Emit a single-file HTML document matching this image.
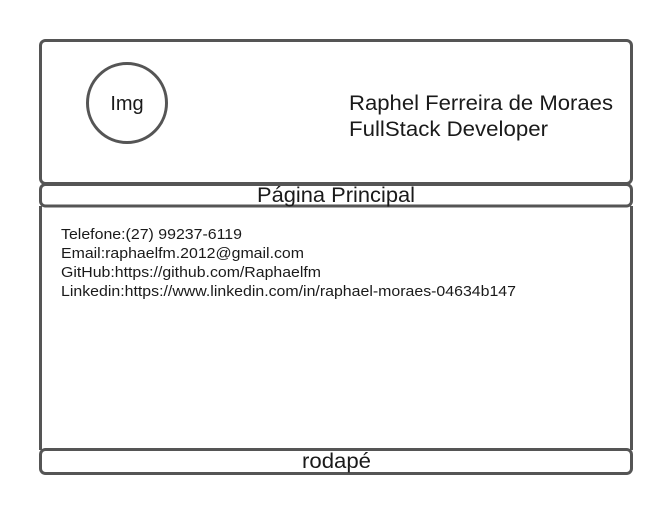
<!DOCTYPE html>
<html><head><meta charset="utf-8"><style>
html,body{margin:0;padding:0;background:#fff;width:672px;height:514px;overflow:hidden}
svg{display:block}
text{font-family:"Liberation Sans",sans-serif;fill:#1a1a1a}
</style></head><body>
<svg width="672" height="514" viewBox="0 0 672 514">
<g fill="none" stroke="#555" stroke-width="3">
<rect x="40.5" y="40.5" width="591" height="143" rx="5"/>
<rect x="40.5" y="184.5" width="591" height="21.5" rx="5"/>
<line x1="40.5" y1="206" x2="40.5" y2="450"/>
<line x1="631.5" y1="206" x2="631.5" y2="450"/>
<rect x="40.5" y="449.5" width="591" height="24" rx="5"/>
<circle cx="127" cy="103" r="39.5"/>
</g>
<text x="127" y="110" font-size="20" text-anchor="middle">Img</text>
<text x="349" y="110" font-size="21" textLength="264" lengthAdjust="spacingAndGlyphs">Raphel Ferreira de Moraes</text>
<text x="349" y="136" font-size="21" textLength="199" lengthAdjust="spacingAndGlyphs">FullStack Developer</text>
<text x="257" y="202" font-size="21" textLength="158" lengthAdjust="spacingAndGlyphs">Página Principal</text>
<g font-size="15">
<text x="61" y="239" textLength="181" lengthAdjust="spacingAndGlyphs">Telefone:(27) 99237-6119</text>
<text x="61" y="258" textLength="243" lengthAdjust="spacingAndGlyphs">Email:raphaelfm.2012@gmail.com</text>
<text x="61" y="277" textLength="260" lengthAdjust="spacingAndGlyphs">GitHub:https://github.com/Raphaelfm</text>
<text x="61" y="296" textLength="455" lengthAdjust="spacingAndGlyphs">Linkedin:https://www.linkedin.com/in/raphael-moraes-04634b147</text>
</g>
<text x="302" y="468" font-size="21" textLength="69" lengthAdjust="spacingAndGlyphs">rodapé</text>
</svg>
</body></html>
